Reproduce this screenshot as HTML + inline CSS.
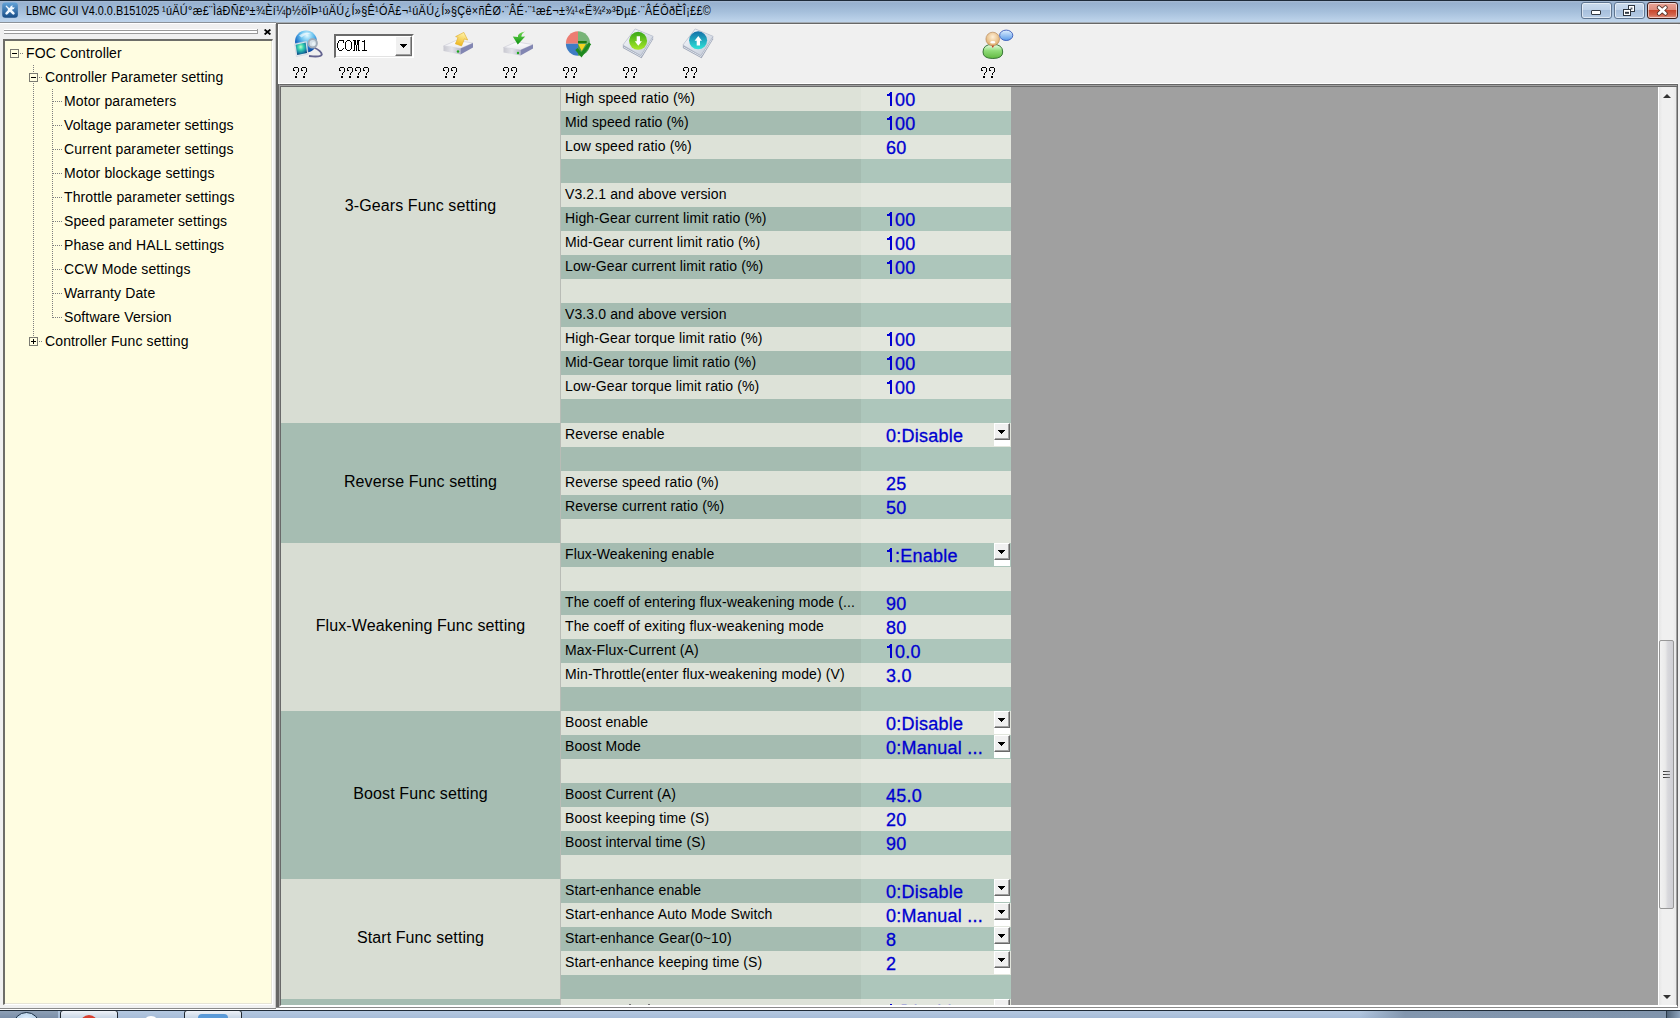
<!DOCTYPE html><html><head><meta charset='utf-8'><style>
*{margin:0;padding:0;box-sizing:border-box}
html,body{width:1680px;height:1018px;overflow:hidden;background:#f0f0f0;font-family:"Liberation Sans",sans-serif}
.a{position:absolute}
.t{position:absolute;white-space:pre;line-height:1}
.tree{font-size:14px;letter-spacing:0.12px;color:#000}
.nm{font-size:14px;letter-spacing:0.12px;color:#000;left:565px}
.val{font-size:18px;letter-spacing:0.25px;color:#0000d0;left:886px;-webkit-text-stroke:0.3px #0000d0}
.grp{font-size:16px;letter-spacing:0.1px;color:#000;text-align:center;width:279px;left:281px}
.q{font-family:"Liberation Mono",monospace;font-size:12.5px;color:#000}
.dd{position:absolute;left:994px;width:16px;height:17px;background:#f0f0f0;border-top:1px solid #fff;border-left:1px solid #fff;border-right:1px solid #696969;border-bottom:1px solid #696969;box-shadow:inset -1px -1px 0 #a0a0a0}

.ddw{position:absolute;left:994px;width:16px;height:6px;background:#fff}
</style></head><body><div class='a' style='left:0;top:0;width:1680px;height:23px;background:linear-gradient(#1e2b3a 0 1px,#a8bcd4 1px,#97b1cf 3px,#a6c0dc 12px,#bdd3ea 21px)'></div><div class='a' style='left:0;top:22px;width:276px;height:1px;background:#8c9298'></div><div class='a' style='left:0;top:23px;width:276px;height:1px;background:#fff'></div><div class='a' style='left:276px;top:22px;width:1404px;height:1px;background:#a4acb4'></div><div class='a' style='left:276px;top:23px;width:1404px;height:1px;background:#686868'></div><svg class='a' style='left:0;top:0' width='22' height='22'><defs><linearGradient id='ai' x1='0' y1='0' x2='0' y2='1'><stop offset='0' stop-color='#62a2d8'/><stop offset='1' stop-color='#174c86'/></linearGradient></defs><rect x='2.2' y='2.6' width='15.7' height='15.1' rx='3' fill='url(#ai)'/><path d='M6.3 6.3 L9 9' stroke='#e8f4ff' stroke-width='1.3' stroke-linecap='round'/><path d='M9 9 L13.4 13.4 M6.6 13.4 L11.6 8.2' stroke='#f0f8ff' stroke-width='2.6' stroke-linecap='round'/><circle cx='12.3' cy='7.5' r='2.1' fill='#f0f8ff'/><circle cx='13.3' cy='6.4' r='1' fill='#4a8ac4'/></svg><div class='t' style='left:26px;top:5px;font-size:12px;color:#000;transform:scaleX(0.905);transform-origin:0 0'>LBMC GUI V4.0.0.B151025</div><div class='t' style='left:162px;top:5px;font-size:12px;letter-spacing:0.35px;color:#000;transform:scaleX(0.905);transform-origin:0 0'>¹úÄÚ°æ£¨ÌáÐÑ£º±¾Èí¼þ½öÏÞ¹úÄÚ¿Í»§Ê¹ÓÃ£¬¹úÄÚ¿Í»§Çë×ñÊØ·¨ÂÉ·¨¹æ£¬±¾¹«Ë¾²»³Ðµ£·¨ÂÉÔðÈÎ¡££©</div><div class='a' style='left:1581px;top:2px;width:31px;height:17px;border:1px solid #5f7590;border-radius:3px;background:linear-gradient(#cbdcee,#bfd2e8 45%,#a7bfdc 50%,#b7cde6);box-shadow:inset 0 0 0 1px rgba(255,255,255,0.55)'></div><div class='a' style='left:1614px;top:2px;width:31px;height:17px;border:1px solid #5f7590;border-radius:3px;background:linear-gradient(#cbdcee,#bfd2e8 45%,#a7bfdc 50%,#b7cde6);box-shadow:inset 0 0 0 1px rgba(255,255,255,0.55)'></div><div class='a' style='left:1647px;top:2px;width:31px;height:17px;border:1px solid #3b1d1a;border-radius:3px;background:linear-gradient(#eaa597,#dd8c7c 45%,#c9472d 50%,#d2664e 80%,#e09484);box-shadow:inset 0 0 0 1px rgba(255,255,255,0.55)'></div><div class='a' style='left:1591px;top:10px;width:10px;height:5px;background:#fff;border:1px solid #333a44;border-radius:1px'></div><svg class='a' style='left:1622px;top:4px' width='14' height='13'><rect x='6.5' y='1.5' width='6' height='6' fill='#fff' stroke='#2e3640'/><rect x='8.5' y='3.5' width='2' height='2' fill='#5a6470'/><rect x='1.5' y='5.5' width='7' height='6' fill='#fff' stroke='#2e3640'/><rect x='3' y='7.8' width='4' height='2' fill='#2e3640'/></svg><svg class='a' style='left:1655px;top:5px' width='14' height='11'><path d='M4 2.5 L10.5 8.5 M10.5 2.5 L4 8.5' stroke='#4a2a20' stroke-width='4.2' stroke-linecap='round'/><path d='M4 2.5 L10.5 8.5 M10.5 2.5 L4 8.5' stroke='#fff' stroke-width='2.6' stroke-linecap='round'/></svg><div class='a' style='left:0;top:24px;width:276px;height:984px;background:#f0f0f0'></div><div class='a' style='left:4px;top:29px;width:254px;height:5px;border-top:1px solid #fff;border-bottom:1px solid #9a9a9a'></div><div class='a' style='left:4px;top:30px;width:254px;height:1px;background:#9a9a9a'></div><div class='a' style='left:4px;top:31px;width:254px;height:2px;background:#fff'></div><svg class='a' style='left:264px;top:29px' width='7' height='6'><path d='M0.6 0.6 L6.4 5.4 M6.4 0.6 L0.6 5.4' stroke='#000' stroke-width='1.9'/></svg><div class='a' style='left:257px;top:29px;width:1px;height:5px;background:#9a9a9a'></div><div class='a' style='left:3px;top:39px;width:270px;height:966px;background:#fffde1;border-top:2px solid #6d6d68;border-left:2px solid #6d6d68;border-right:1px solid #fff;border-bottom:1px solid #fff;box-shadow:inset -1px -1px 0 #e6e4d6'></div><div class='a' style='left:10px;top:49px;width:9px;height:9px;border:1px solid #7a7a72'></div><div class='a' style='left:12px;top:53px;width:5px;height:1px;background:#000'></div><div class='a' style='left:20px;top:53px;width:4px;height:1px;background:repeating-linear-gradient(90deg,#7f7f7f 0 1px,transparent 1px 2px)'></div><div class='t tree' style='left:26px;top:46px'>FOC Controller</div><div class='a' style='left:33px;top:65px;width:1px;height:7px;background:repeating-linear-gradient(#7f7f7f 0 1px,transparent 1px 2px)'></div><div class='a' style='left:33px;top:83px;width:1px;height:259px;background:repeating-linear-gradient(#7f7f7f 0 1px,transparent 1px 2px)'></div><div class='a' style='left:29px;top:73px;width:9px;height:9px;border:1px solid #7a7a72'></div><div class='a' style='left:31px;top:77px;width:5px;height:1px;background:#000'></div><div class='a' style='left:39px;top:77px;width:4px;height:1px;background:repeating-linear-gradient(90deg,#7f7f7f 0 1px,transparent 1px 2px)'></div><div class='t tree' style='left:45px;top:70px'>Controller Parameter setting</div><div class='a' style='left:52px;top:89px;width:1px;height:229px;background:repeating-linear-gradient(#7f7f7f 0 1px,transparent 1px 2px)'></div><div class='a' style='left:53px;top:101px;width:9px;height:1px;background:repeating-linear-gradient(90deg,#7f7f7f 0 1px,transparent 1px 2px)'></div><div class='t tree' style='left:64px;top:94px'>Motor parameters</div><div class='a' style='left:53px;top:125px;width:9px;height:1px;background:repeating-linear-gradient(90deg,#7f7f7f 0 1px,transparent 1px 2px)'></div><div class='t tree' style='left:64px;top:118px'>Voltage parameter settings</div><div class='a' style='left:53px;top:149px;width:9px;height:1px;background:repeating-linear-gradient(90deg,#7f7f7f 0 1px,transparent 1px 2px)'></div><div class='t tree' style='left:64px;top:142px'>Current parameter settings</div><div class='a' style='left:53px;top:173px;width:9px;height:1px;background:repeating-linear-gradient(90deg,#7f7f7f 0 1px,transparent 1px 2px)'></div><div class='t tree' style='left:64px;top:166px'>Motor blockage settings</div><div class='a' style='left:53px;top:197px;width:9px;height:1px;background:repeating-linear-gradient(90deg,#7f7f7f 0 1px,transparent 1px 2px)'></div><div class='t tree' style='left:64px;top:190px'>Throttle parameter settings</div><div class='a' style='left:53px;top:221px;width:9px;height:1px;background:repeating-linear-gradient(90deg,#7f7f7f 0 1px,transparent 1px 2px)'></div><div class='t tree' style='left:64px;top:214px'>Speed parameter settings</div><div class='a' style='left:53px;top:245px;width:9px;height:1px;background:repeating-linear-gradient(90deg,#7f7f7f 0 1px,transparent 1px 2px)'></div><div class='t tree' style='left:64px;top:238px'>Phase and HALL settings</div><div class='a' style='left:53px;top:269px;width:9px;height:1px;background:repeating-linear-gradient(90deg,#7f7f7f 0 1px,transparent 1px 2px)'></div><div class='t tree' style='left:64px;top:262px'>CCW Mode settings</div><div class='a' style='left:53px;top:293px;width:9px;height:1px;background:repeating-linear-gradient(90deg,#7f7f7f 0 1px,transparent 1px 2px)'></div><div class='t tree' style='left:64px;top:286px'>Warranty Date</div><div class='a' style='left:53px;top:317px;width:9px;height:1px;background:repeating-linear-gradient(90deg,#7f7f7f 0 1px,transparent 1px 2px)'></div><div class='t tree' style='left:64px;top:310px'>Software Version</div><div class='a' style='left:29px;top:337px;width:9px;height:9px;border:1px solid #7a7a72'></div><div class='a' style='left:31px;top:341px;width:5px;height:1px;background:#000'></div><div class='a' style='left:33px;top:339px;width:1px;height:5px;background:#000'></div><div class='a' style='left:39px;top:341px;width:4px;height:1px;background:repeating-linear-gradient(90deg,#7f7f7f 0 1px,transparent 1px 2px)'></div><div class='t tree' style='left:45px;top:334px'>Controller Func setting</div><div class='a' style='left:275px;top:24px;width:1px;height:984px;background:#c8c8c8'></div><div class='a' style='left:276px;top:23px;width:2px;height:985px;background:#666'></div><div class='a' style='left:278px;top:84px;width:1px;height:924px;background:#666'></div><div class='a' style='left:278px;top:24px;width:1402px;height:60px;background:#f0f0f0;border-left:1px solid #fff;border-top:1px solid #f8f8f8'></div><div class='a' style='left:279px;top:83px;width:1401px;height:1px;background:#fff'></div><div class='a' style='left:334px;top:34px;width:80px;height:24px;background:#fff;border-top:2px solid #6a6a6a;border-left:2px solid #6a6a6a;border-right:2px solid #fff;border-bottom:1px solid #fff;box-shadow:inset -1px 0 0 #e3e3e3'></div><div class='a' style='left:336px;top:56px;width:76px;height:1px;background:#e3e3e3'></div><div class='a' style='left:395px;top:36px;width:17px;height:20px;background:#f0f0f0;border-top:1px solid #fff;border-left:1px solid #fff;border-right:1px solid #696969;border-bottom:1px solid #696969;box-shadow:inset -1px -1px 0 #a0a0a0'></div><svg class='a' style='left:400px;top:44px' width='7' height='4' shape-rendering='crispEdges'><path d='M0 0h7v1h-1v1h-1v1h-1v1h-1v-1h-1v-1h-1v-1h-1z' fill='#000'/></svg><svg class='a' style='left:0;top:0' width='1100' height='90' shape-rendering='crispEdges'><path fill='#000' d='M339 40h5v1h-5zM347 40h3v1h-3zM353 40h3v1h-3zM357 40h3v1h-3zM364 40h1v1h-1zM338 41h1v1h-1zM343 41h1v1h-1zM346 41h1v1h-1zM350 41h1v1h-1zM354 41h2v1h-2zM357 41h2v1h-2zM362 41h3v1h-3zM338 42h1v1h-1zM343 42h1v1h-1zM345 42h1v1h-1zM351 42h1v1h-1zM354 42h2v1h-2zM357 42h2v1h-2zM364 42h1v1h-1zM337 43h1v1h-1zM345 43h1v1h-1zM351 43h1v1h-1zM354 43h2v1h-2zM357 43h2v1h-2zM364 43h1v1h-1zM337 44h1v1h-1zM345 44h1v1h-1zM351 44h1v1h-1zM354 44h2v1h-2zM357 44h2v1h-2zM364 44h1v1h-1zM337 45h1v1h-1zM345 45h1v1h-1zM351 45h1v1h-1zM354 45h1v1h-1zM356 45h1v1h-1zM358 45h1v1h-1zM364 45h1v1h-1zM337 46h1v1h-1zM345 46h1v1h-1zM351 46h1v1h-1zM354 46h1v1h-1zM356 46h1v1h-1zM358 46h1v1h-1zM364 46h1v1h-1zM337 47h1v1h-1zM345 47h1v1h-1zM351 47h1v1h-1zM354 47h1v1h-1zM356 47h1v1h-1zM358 47h1v1h-1zM364 47h1v1h-1zM338 48h1v1h-1zM343 48h1v1h-1zM345 48h1v1h-1zM351 48h1v1h-1zM354 48h1v1h-1zM356 48h1v1h-1zM358 48h1v1h-1zM364 48h1v1h-1zM338 49h1v1h-1zM342 49h1v1h-1zM346 49h1v1h-1zM350 49h1v1h-1zM354 49h1v1h-1zM356 49h1v1h-1zM358 49h1v1h-1zM364 49h1v1h-1zM339 50h3v1h-3zM347 50h3v1h-3zM353 50h2v1h-2zM356 50h1v1h-1zM358 50h2v1h-2zM362 50h5v1h-5zM294 67h4v1h-4zM302 67h4v1h-4zM340 67h4v1h-4zM348 67h4v1h-4zM356 67h4v1h-4zM364 67h4v1h-4zM444 67h4v1h-4zM452 67h4v1h-4zM504 67h4v1h-4zM512 67h4v1h-4zM564 67h4v1h-4zM572 67h4v1h-4zM624 67h4v1h-4zM632 67h4v1h-4zM684 67h4v1h-4zM692 67h4v1h-4zM982 67h4v1h-4zM990 67h4v1h-4zM293 68h1v1h-1zM298 68h1v1h-1zM301 68h1v1h-1zM306 68h1v1h-1zM339 68h1v1h-1zM344 68h1v1h-1zM347 68h1v1h-1zM352 68h1v1h-1zM355 68h1v1h-1zM360 68h1v1h-1zM363 68h1v1h-1zM368 68h1v1h-1zM443 68h1v1h-1zM448 68h1v1h-1zM451 68h1v1h-1zM456 68h1v1h-1zM503 68h1v1h-1zM508 68h1v1h-1zM511 68h1v1h-1zM516 68h1v1h-1zM563 68h1v1h-1zM568 68h1v1h-1zM571 68h1v1h-1zM576 68h1v1h-1zM623 68h1v1h-1zM628 68h1v1h-1zM631 68h1v1h-1zM636 68h1v1h-1zM683 68h1v1h-1zM688 68h1v1h-1zM691 68h1v1h-1zM696 68h1v1h-1zM981 68h1v1h-1zM986 68h1v1h-1zM989 68h1v1h-1zM994 68h1v1h-1zM293 69h1v1h-1zM298 69h1v1h-1zM301 69h1v1h-1zM306 69h1v1h-1zM339 69h1v1h-1zM344 69h1v1h-1zM347 69h1v1h-1zM352 69h1v1h-1zM355 69h1v1h-1zM360 69h1v1h-1zM363 69h1v1h-1zM368 69h1v1h-1zM443 69h1v1h-1zM448 69h1v1h-1zM451 69h1v1h-1zM456 69h1v1h-1zM503 69h1v1h-1zM508 69h1v1h-1zM511 69h1v1h-1zM516 69h1v1h-1zM563 69h1v1h-1zM568 69h1v1h-1zM571 69h1v1h-1zM576 69h1v1h-1zM623 69h1v1h-1zM628 69h1v1h-1zM631 69h1v1h-1zM636 69h1v1h-1zM683 69h1v1h-1zM688 69h1v1h-1zM691 69h1v1h-1zM696 69h1v1h-1zM981 69h1v1h-1zM986 69h1v1h-1zM989 69h1v1h-1zM994 69h1v1h-1zM293 70h2v1h-2zM298 70h1v1h-1zM301 70h2v1h-2zM306 70h1v1h-1zM339 70h2v1h-2zM344 70h1v1h-1zM347 70h2v1h-2zM352 70h1v1h-1zM355 70h2v1h-2zM360 70h1v1h-1zM363 70h2v1h-2zM368 70h1v1h-1zM443 70h2v1h-2zM448 70h1v1h-1zM451 70h2v1h-2zM456 70h1v1h-1zM503 70h2v1h-2zM508 70h1v1h-1zM511 70h2v1h-2zM516 70h1v1h-1zM563 70h2v1h-2zM568 70h1v1h-1zM571 70h2v1h-2zM576 70h1v1h-1zM623 70h2v1h-2zM628 70h1v1h-1zM631 70h2v1h-2zM636 70h1v1h-1zM683 70h2v1h-2zM688 70h1v1h-1zM691 70h2v1h-2zM696 70h1v1h-1zM981 70h2v1h-2zM986 70h1v1h-1zM989 70h2v1h-2zM994 70h1v1h-1zM298 71h1v1h-1zM306 71h1v1h-1zM344 71h1v1h-1zM352 71h1v1h-1zM360 71h1v1h-1zM368 71h1v1h-1zM448 71h1v1h-1zM456 71h1v1h-1zM508 71h1v1h-1zM516 71h1v1h-1zM568 71h1v1h-1zM576 71h1v1h-1zM628 71h1v1h-1zM636 71h1v1h-1zM688 71h1v1h-1zM696 71h1v1h-1zM986 71h1v1h-1zM994 71h1v1h-1zM297 72h1v1h-1zM305 72h1v1h-1zM343 72h1v1h-1zM351 72h1v1h-1zM359 72h1v1h-1zM367 72h1v1h-1zM447 72h1v1h-1zM455 72h1v1h-1zM507 72h1v1h-1zM515 72h1v1h-1zM567 72h1v1h-1zM575 72h1v1h-1zM627 72h1v1h-1zM635 72h1v1h-1zM687 72h1v1h-1zM695 72h1v1h-1zM985 72h1v1h-1zM993 72h1v1h-1zM296 73h1v1h-1zM304 73h1v1h-1zM342 73h1v1h-1zM350 73h1v1h-1zM358 73h1v1h-1zM366 73h1v1h-1zM446 73h1v1h-1zM454 73h1v1h-1zM506 73h1v1h-1zM514 73h1v1h-1zM566 73h1v1h-1zM574 73h1v1h-1zM626 73h1v1h-1zM634 73h1v1h-1zM686 73h1v1h-1zM694 73h1v1h-1zM984 73h1v1h-1zM992 73h1v1h-1zM296 74h1v1h-1zM304 74h1v1h-1zM342 74h1v1h-1zM350 74h1v1h-1zM358 74h1v1h-1zM366 74h1v1h-1zM446 74h1v1h-1zM454 74h1v1h-1zM506 74h1v1h-1zM514 74h1v1h-1zM566 74h1v1h-1zM574 74h1v1h-1zM626 74h1v1h-1zM634 74h1v1h-1zM686 74h1v1h-1zM694 74h1v1h-1zM984 74h1v1h-1zM992 74h1v1h-1zM295 76h2v1h-2zM303 76h2v1h-2zM341 76h2v1h-2zM349 76h2v1h-2zM357 76h2v1h-2zM365 76h2v1h-2zM445 76h2v1h-2zM453 76h2v1h-2zM505 76h2v1h-2zM513 76h2v1h-2zM565 76h2v1h-2zM573 76h2v1h-2zM625 76h2v1h-2zM633 76h2v1h-2zM685 76h2v1h-2zM693 76h2v1h-2zM983 76h2v1h-2zM991 76h2v1h-2zM295 77h2v1h-2zM303 77h2v1h-2zM341 77h2v1h-2zM349 77h2v1h-2zM357 77h2v1h-2zM365 77h2v1h-2zM445 77h2v1h-2zM453 77h2v1h-2zM505 77h2v1h-2zM513 77h2v1h-2zM565 77h2v1h-2zM573 77h2v1h-2zM625 77h2v1h-2zM633 77h2v1h-2zM685 77h2v1h-2zM693 77h2v1h-2zM983 77h2v1h-2zM991 77h2v1h-2z'/></svg><svg class='a' style='left:290px;top:26px' width='36' height='36' viewBox='0 0 36 36'>
 <defs>
  <radialGradient id='gl' cx='0.55' cy='0.22' r='0.8'><stop offset='0' stop-color='#e4faff'/><stop offset='0.35' stop-color='#6cc4f0'/><stop offset='0.7' stop-color='#1c70c8'/><stop offset='1' stop-color='#083c94'/></radialGradient>
  <radialGradient id='scr' cx='0.45' cy='0.35' r='0.7'><stop offset='0' stop-color='#c0ffc8'/><stop offset='0.35' stop-color='#38d0b0'/><stop offset='0.75' stop-color='#1478a0'/><stop offset='1' stop-color='#0a3470'/></radialGradient>
 </defs>
 <circle cx='16' cy='15.5' r='11' fill='url(#gl)'/>
 <path d='M9 9.5 Q14 5.5 21 7.5 Q15 8 11.5 11.5 Z' fill='#fff' opacity='0.6'/>
 <path d='M24 21.5 Q31.5 25 31.8 28.5 Q31 31.5 19 30' fill='none' stroke='#646490' stroke-width='1.9'/>
 <circle cx='22.7' cy='17.3' r='4.2' fill='#d4e0e8' stroke='#a0acb8' stroke-width='2'/>
 <circle cx='23.6' cy='17.9' r='1.8' fill='#e8f2f6'/>
 <path d='M4.5 17.8 L16.6 15.2 L18.2 28.2 L6.4 30.6 Z' fill='#e4eaf0' stroke='#c4ccd6' stroke-width='0.5'/>
 <path d='M5.6 18.8 L15.7 16.6 L17 26.9 L7.2 29 Z' fill='url(#scr)'/>
</svg>
<svg class='a' style='left:442px;top:28px' width='34' height='30' viewBox='0 0 34 30'>
 <defs><linearGradient id='dtop' x1='0' y1='0' x2='0' y2='1'><stop offset='0' stop-color='#ffffff'/><stop offset='1' stop-color='#e8e8ee'/></linearGradient>
 <linearGradient id='dfr' x1='0' y1='0' x2='1' y2='0'><stop offset='0' stop-color='#c8c8d0'/><stop offset='0.5' stop-color='#e4e4ea'/><stop offset='1' stop-color='#b8b8c8'/></linearGradient>
 <linearGradient id='ya' x1='0' y1='0' x2='0' y2='1'><stop offset='0' stop-color='#fff6b0'/><stop offset='1' stop-color='#f0b820'/></linearGradient></defs>
 <path d='M1.5 18 L14 12.5 L31 15 L18.5 20.5 Z' fill='url(#dtop)' stroke='#c8c8d4' stroke-width='0.6'/>
 <path d='M1.5 18 L18.5 20.5 L18.5 26.5 L1.5 23 Z' fill='url(#dfr)'/>
 <path d='M18.5 20.5 L31 15 L31 19.5 L18.5 26.5 Z' fill='#8286b2'/>
 <circle cx='16' cy='23.5' r='1.2' fill='#1aa81a'/>
 <path d='M11.5 10 L18 3.5 L24 9.5 L20.5 9.5 Q20.5 13 20 17 L13.5 17 Q14 13 14 10 Z' fill='url(#ya)' stroke='#e0b030' stroke-width='0.6' transform='rotate(18 17 16)'/>
</svg>
<svg class='a' style='left:502px;top:28px' width='34' height='30' viewBox='0 0 34 30'>
 <defs><linearGradient id='ga' x1='0' y1='0' x2='0' y2='1'><stop offset='0' stop-color='#70d850'/><stop offset='1' stop-color='#0a9010'/></linearGradient></defs>
 <path d='M1.5 19.5 L14 14 L31 16.5 L18.5 22 Z' fill='url(#dtop)' stroke='#c8c8d4' stroke-width='0.6'/>
 <path d='M1.5 19.5 L18.5 22 L18.5 27.5 L1.5 24.5 Z' fill='url(#dfr)'/>
 <path d='M18.5 22 L31 16.5 L31 20.5 L18.5 27.5 Z' fill='#8286b2'/>
 <circle cx='16' cy='25' r='1.2' fill='#1aa81a'/>
 <path d='M23 3.5 Q15 5 16 9 L10.8 8.6 L15.8 16.6 L23.2 8.6 L19.5 8.8 Q19 6 23 3.5 Z' fill='url(#ga)'/>
</svg>
<svg class='a' style='left:564px;top:30px' width='28' height='28' viewBox='0 0 28 28'>
 <path d='M14 13.7 V1.2 A12.1 12.1 0 0 0 1.9 13.7 Z' fill='#ec7c72'/>
 <path d='M14 13.7 V1.2 A12.1 12.1 0 0 1 26.1 13.7 Z' fill='#78b478'/>
 <path d='M14 13.7 H1.9 A12.1 12.1 0 0 0 14 25.8 Z' fill='#3e7cc4'/>
 <path d='M14 13.7 H26.1 A12.1 12.1 0 0 1 14 25.8 Z' fill='#4c9c4c'/>
 <rect x='14' y='11' width='8.7' height='2.4' fill='#1f7a10'/>
 <path d='M14.2 14 L21.9 14 L17.7 21 Z' fill='#f4d420'/>
 <path d='M12.4 19 L17.4 25 L26 13.4' fill='none' stroke='#1e8a1e' stroke-width='3'/>
</svg>
<svg class='a' style='left:618px;top:24px' width='40' height='38' viewBox='0 0 40 38'>
 <defs><linearGradient id='bk' x1='0' y1='0' x2='1' y2='1'><stop offset='0' stop-color='#fbfcff'/><stop offset='1' stop-color='#c0c8d6'/></linearGradient>
 <linearGradient id='gc' x1='0' y1='0' x2='0' y2='1'><stop offset='0' stop-color='#38a818'/><stop offset='1' stop-color='#a8e828'/></linearGradient>
 <linearGradient id='bc' x1='0' y1='0' x2='0' y2='1'><stop offset='0' stop-color='#1470a8'/><stop offset='1' stop-color='#30e4d8'/></linearGradient></defs>
 <path d='M4.9 23.9 L23.5 34.3 L35.1 15.3 L35.1 12.3 L17.2 4.9 L4.9 21 Z' fill='#9aa2b4'/><path d='M5.5 23 L23 32.6 L34.5 14.3' fill='none' stroke='#eef2f8' stroke-width='0.8'/>
 <path d='M4.9 21 L17.2 4.9 L35.1 12.3 L22.8 31.5 Z' fill='url(#bk)' stroke='#b8c0cc' stroke-width='0.6'/>
 <circle cx='20.1' cy='16.8' r='9' fill='url(#gc)'/>
 <path d='M18.7 12.3 H22 V17.2 H23.9 L20.3 21.8 L16.8 17.2 H18.7 Z' fill='#fff'/>
</svg>
<svg class='a' style='left:678px;top:24px' width='40' height='38' viewBox='0 0 40 38'>
 <path d='M4.9 23.9 L23.5 34.3 L35.1 15.3 L35.1 12.3 L17.2 4.9 L4.9 21 Z' fill='#9aa2b4'/><path d='M5.5 23 L23 32.6 L34.5 14.3' fill='none' stroke='#eef2f8' stroke-width='0.8'/>
 <path d='M4.9 21 L17.2 4.9 L35.1 12.3 L22.8 31.5 Z' fill='url(#bk)' stroke='#b8c0cc' stroke-width='0.6'/>
 <circle cx='20.1' cy='16.3' r='9' fill='url(#bc)'/>
 <path d='M18.7 21.6 H22 V16.8 H23.9 L20.3 11.9 L16.6 16.8 H18.7 Z' fill='#fff'/>
</svg>
<svg class='a' style='left:980px;top:28px' width='36' height='34' viewBox='0 0 36 34'>
 <defs><radialGradient id='hd' cx='0.5' cy='0.35' r='0.6'><stop offset='0' stop-color='#fff0d8'/><stop offset='1' stop-color='#e0b070'/></radialGradient>
 <linearGradient id='bd' x1='0' y1='0' x2='0' y2='1'><stop offset='0' stop-color='#f0fff0'/><stop offset='0.45' stop-color='#90dc78'/><stop offset='1' stop-color='#60b840'/></linearGradient>
 <linearGradient id='bb' x1='0' y1='0' x2='0' y2='1'><stop offset='0' stop-color='#e0f0ff'/><stop offset='1' stop-color='#5a9ae8'/></linearGradient></defs>
 <path d='M3 24 Q3 16.3 12.8 16.3 Q22.7 16.3 22.7 24 Q22.7 30.5 12.8 30.5 Q3 30.5 3 24 Z' fill='url(#bd)' stroke='#2a6a2a' stroke-width='0.9'/>
 <path d='M11.3 17 L14.3 17 L12.8 20 Z' fill='#c82010'/>
 <circle cx='12.7' cy='11' r='6.8' fill='url(#hd)' stroke='#b08050' stroke-width='0.6'/>
 <ellipse cx='12.8' cy='14.2' rx='2.6' ry='1.3' fill='#fff'/>
 <ellipse cx='26.2' cy='7.3' rx='6.6' ry='5.2' fill='url(#bb)' stroke='#3a5ab8' stroke-width='0.9'/>
</svg>
<div class='a' style='left:279px;top:84px;width:1399px;height:923px;background:#a0a0a0;border-top:1px solid #666;border-left:1px solid #a0a0a0;border-right:1px solid #666;border-bottom:1px solid #fff'></div><div class='a' style='left:279px;top:85px;width:1398px;height:1px;background:#a0a0a0'></div><div class='a' style='left:280px;top:86px;width:1397px;height:920px;border-top:1px solid #696969;border-left:1px solid #696969;border-bottom:1px solid #fff'></div><div class='a' style='left:281px;top:87px;width:1377px;height:918px;overflow:hidden'><div class='a' style='left:-281px;top:-87px;width:1680px;height:1100px'><div class='a' style='left:281px;top:87px;width:279px;height:336px;background:#d8ddd3'></div><div class='t grp' style='top:198px'>3-Gears Func setting</div><div class='a' style='left:561px;top:87px;width:300px;height:24px;background:#dde2d8'></div><div class='a' style='left:861px;top:87px;width:150px;height:24px;background:#e2e6dd'></div><div class='t nm' style='top:91px'>High speed ratio (%)</div><svg class='a' style='left:886px;top:92px' width='8' height='14' shape-rendering='crispEdges'><path d='M4 0h2v14h-2z M3 1h1v3h-1z M1 2h2v2h-2z' fill='#0000d0'/></svg><div class='t val' style='top:91px;left:895px'>00</div><div class='a' style='left:561px;top:111px;width:300px;height:24px;background:#a5bcb1'></div><div class='a' style='left:861px;top:111px;width:150px;height:24px;background:#adc6bb'></div><div class='t nm' style='top:115px'>Mid speed ratio (%)</div><svg class='a' style='left:886px;top:116px' width='8' height='14' shape-rendering='crispEdges'><path d='M4 0h2v14h-2z M3 1h1v3h-1z M1 2h2v2h-2z' fill='#0000d0'/></svg><div class='t val' style='top:115px;left:895px'>00</div><div class='a' style='left:561px;top:135px;width:300px;height:24px;background:#dde2d8'></div><div class='a' style='left:861px;top:135px;width:150px;height:24px;background:#e2e6dd'></div><div class='t nm' style='top:139px'>Low speed ratio (%)</div><div class='t val' style='top:139px'>60</div><div class='a' style='left:561px;top:159px;width:300px;height:24px;background:#a5bcb1'></div><div class='a' style='left:861px;top:159px;width:150px;height:24px;background:#adc6bb'></div><div class='a' style='left:561px;top:183px;width:300px;height:24px;background:#dde2d8'></div><div class='a' style='left:861px;top:183px;width:150px;height:24px;background:#e2e6dd'></div><div class='t nm' style='top:187px'>V3.2.1 and above version</div><div class='a' style='left:561px;top:207px;width:300px;height:24px;background:#a5bcb1'></div><div class='a' style='left:861px;top:207px;width:150px;height:24px;background:#adc6bb'></div><div class='t nm' style='top:211px'>High-Gear current limit ratio (%)</div><svg class='a' style='left:886px;top:212px' width='8' height='14' shape-rendering='crispEdges'><path d='M4 0h2v14h-2z M3 1h1v3h-1z M1 2h2v2h-2z' fill='#0000d0'/></svg><div class='t val' style='top:211px;left:895px'>00</div><div class='a' style='left:561px;top:231px;width:300px;height:24px;background:#dde2d8'></div><div class='a' style='left:861px;top:231px;width:150px;height:24px;background:#e2e6dd'></div><div class='t nm' style='top:235px'>Mid-Gear current limit ratio (%)</div><svg class='a' style='left:886px;top:236px' width='8' height='14' shape-rendering='crispEdges'><path d='M4 0h2v14h-2z M3 1h1v3h-1z M1 2h2v2h-2z' fill='#0000d0'/></svg><div class='t val' style='top:235px;left:895px'>00</div><div class='a' style='left:561px;top:255px;width:300px;height:24px;background:#a5bcb1'></div><div class='a' style='left:861px;top:255px;width:150px;height:24px;background:#adc6bb'></div><div class='t nm' style='top:259px'>Low-Gear current limit ratio (%)</div><svg class='a' style='left:886px;top:260px' width='8' height='14' shape-rendering='crispEdges'><path d='M4 0h2v14h-2z M3 1h1v3h-1z M1 2h2v2h-2z' fill='#0000d0'/></svg><div class='t val' style='top:259px;left:895px'>00</div><div class='a' style='left:561px;top:279px;width:300px;height:24px;background:#dde2d8'></div><div class='a' style='left:861px;top:279px;width:150px;height:24px;background:#e2e6dd'></div><div class='a' style='left:561px;top:303px;width:300px;height:24px;background:#a5bcb1'></div><div class='a' style='left:861px;top:303px;width:150px;height:24px;background:#adc6bb'></div><div class='t nm' style='top:307px'>V3.3.0 and above version</div><div class='a' style='left:561px;top:327px;width:300px;height:24px;background:#dde2d8'></div><div class='a' style='left:861px;top:327px;width:150px;height:24px;background:#e2e6dd'></div><div class='t nm' style='top:331px'>High-Gear torque limit ratio (%)</div><svg class='a' style='left:886px;top:332px' width='8' height='14' shape-rendering='crispEdges'><path d='M4 0h2v14h-2z M3 1h1v3h-1z M1 2h2v2h-2z' fill='#0000d0'/></svg><div class='t val' style='top:331px;left:895px'>00</div><div class='a' style='left:561px;top:351px;width:300px;height:24px;background:#a5bcb1'></div><div class='a' style='left:861px;top:351px;width:150px;height:24px;background:#adc6bb'></div><div class='t nm' style='top:355px'>Mid-Gear torque limit ratio (%)</div><svg class='a' style='left:886px;top:356px' width='8' height='14' shape-rendering='crispEdges'><path d='M4 0h2v14h-2z M3 1h1v3h-1z M1 2h2v2h-2z' fill='#0000d0'/></svg><div class='t val' style='top:355px;left:895px'>00</div><div class='a' style='left:561px;top:375px;width:300px;height:24px;background:#dde2d8'></div><div class='a' style='left:861px;top:375px;width:150px;height:24px;background:#e2e6dd'></div><div class='t nm' style='top:379px'>Low-Gear torque limit ratio (%)</div><svg class='a' style='left:886px;top:380px' width='8' height='14' shape-rendering='crispEdges'><path d='M4 0h2v14h-2z M3 1h1v3h-1z M1 2h2v2h-2z' fill='#0000d0'/></svg><div class='t val' style='top:379px;left:895px'>00</div><div class='a' style='left:561px;top:399px;width:300px;height:24px;background:#a5bcb1'></div><div class='a' style='left:861px;top:399px;width:150px;height:24px;background:#adc6bb'></div><div class='a' style='left:281px;top:423px;width:279px;height:120px;background:#a6bdb2'></div><div class='t grp' style='top:474px'>Reverse Func setting</div><div class='a' style='left:561px;top:423px;width:300px;height:24px;background:#dde2d8'></div><div class='a' style='left:861px;top:423px;width:150px;height:24px;background:#e2e6dd'></div><div class='t nm' style='top:427px'>Reverse enable</div><div class='t val' style='top:427px'>0:Disable</div><div class='dd' style='top:423px'></div><svg class='a' style='left:998px;top:430px' width='7' height='4' shape-rendering='crispEdges'><path d='M0 0h7v1h-1v1h-1v1h-1v1h-1v-1h-1v-1h-1v-1h-1z' fill='#000'/></svg><div class='ddw' style='top:440px'></div><div class='a' style='left:561px;top:447px;width:300px;height:24px;background:#a5bcb1'></div><div class='a' style='left:861px;top:447px;width:150px;height:24px;background:#adc6bb'></div><div class='a' style='left:561px;top:471px;width:300px;height:24px;background:#dde2d8'></div><div class='a' style='left:861px;top:471px;width:150px;height:24px;background:#e2e6dd'></div><div class='t nm' style='top:475px'>Reverse speed ratio (%)</div><div class='t val' style='top:475px'>25</div><div class='a' style='left:561px;top:495px;width:300px;height:24px;background:#a5bcb1'></div><div class='a' style='left:861px;top:495px;width:150px;height:24px;background:#adc6bb'></div><div class='t nm' style='top:499px'>Reverse current ratio (%)</div><div class='t val' style='top:499px'>50</div><div class='a' style='left:561px;top:519px;width:300px;height:24px;background:#dde2d8'></div><div class='a' style='left:861px;top:519px;width:150px;height:24px;background:#e2e6dd'></div><div class='a' style='left:281px;top:543px;width:279px;height:168px;background:#d8ddd3'></div><div class='t grp' style='top:618px'>Flux-Weakening Func setting</div><div class='a' style='left:561px;top:543px;width:300px;height:24px;background:#a5bcb1'></div><div class='a' style='left:861px;top:543px;width:150px;height:24px;background:#adc6bb'></div><div class='t nm' style='top:547px'>Flux-Weakening enable</div><svg class='a' style='left:886px;top:548px' width='8' height='14' shape-rendering='crispEdges'><path d='M4 0h2v14h-2z M3 1h1v3h-1z M1 2h2v2h-2z' fill='#0000d0'/></svg><div class='t val' style='top:547px;left:895px'>:Enable</div><div class='dd' style='top:543px'></div><svg class='a' style='left:998px;top:550px' width='7' height='4' shape-rendering='crispEdges'><path d='M0 0h7v1h-1v1h-1v1h-1v1h-1v-1h-1v-1h-1v-1h-1z' fill='#000'/></svg><div class='ddw' style='top:560px'></div><div class='a' style='left:561px;top:567px;width:300px;height:24px;background:#dde2d8'></div><div class='a' style='left:861px;top:567px;width:150px;height:24px;background:#e2e6dd'></div><div class='a' style='left:561px;top:591px;width:300px;height:24px;background:#a5bcb1'></div><div class='a' style='left:861px;top:591px;width:150px;height:24px;background:#adc6bb'></div><div class='t nm' style='top:595px'>The coeff of entering flux-weakening mode (...</div><div class='t val' style='top:595px'>90</div><div class='a' style='left:561px;top:615px;width:300px;height:24px;background:#dde2d8'></div><div class='a' style='left:861px;top:615px;width:150px;height:24px;background:#e2e6dd'></div><div class='t nm' style='top:619px'>The coeff of exiting flux-weakening mode</div><div class='t val' style='top:619px'>80</div><div class='a' style='left:561px;top:639px;width:300px;height:24px;background:#a5bcb1'></div><div class='a' style='left:861px;top:639px;width:150px;height:24px;background:#adc6bb'></div><div class='t nm' style='top:643px'>Max-Flux-Current (A)</div><svg class='a' style='left:886px;top:644px' width='8' height='14' shape-rendering='crispEdges'><path d='M4 0h2v14h-2z M3 1h1v3h-1z M1 2h2v2h-2z' fill='#0000d0'/></svg><div class='t val' style='top:643px;left:895px'>0.0</div><div class='a' style='left:561px;top:663px;width:300px;height:24px;background:#dde2d8'></div><div class='a' style='left:861px;top:663px;width:150px;height:24px;background:#e2e6dd'></div><div class='t nm' style='top:667px'>Min-Throttle(enter flux-weakening mode) (V)</div><div class='t val' style='top:667px'>3.0</div><div class='a' style='left:561px;top:687px;width:300px;height:24px;background:#a5bcb1'></div><div class='a' style='left:861px;top:687px;width:150px;height:24px;background:#adc6bb'></div><div class='a' style='left:281px;top:711px;width:279px;height:168px;background:#a6bdb2'></div><div class='t grp' style='top:786px'>Boost Func setting</div><div class='a' style='left:561px;top:711px;width:300px;height:24px;background:#dde2d8'></div><div class='a' style='left:861px;top:711px;width:150px;height:24px;background:#e2e6dd'></div><div class='t nm' style='top:715px'>Boost enable</div><div class='t val' style='top:715px'>0:Disable</div><div class='dd' style='top:711px'></div><svg class='a' style='left:998px;top:718px' width='7' height='4' shape-rendering='crispEdges'><path d='M0 0h7v1h-1v1h-1v1h-1v1h-1v-1h-1v-1h-1v-1h-1z' fill='#000'/></svg><div class='ddw' style='top:728px'></div><div class='a' style='left:561px;top:735px;width:300px;height:24px;background:#a5bcb1'></div><div class='a' style='left:861px;top:735px;width:150px;height:24px;background:#adc6bb'></div><div class='t nm' style='top:739px'>Boost Mode</div><div class='t val' style='top:739px'>0:Manual ...</div><div class='dd' style='top:735px'></div><svg class='a' style='left:998px;top:742px' width='7' height='4' shape-rendering='crispEdges'><path d='M0 0h7v1h-1v1h-1v1h-1v1h-1v-1h-1v-1h-1v-1h-1z' fill='#000'/></svg><div class='ddw' style='top:752px'></div><div class='a' style='left:561px;top:759px;width:300px;height:24px;background:#dde2d8'></div><div class='a' style='left:861px;top:759px;width:150px;height:24px;background:#e2e6dd'></div><div class='a' style='left:561px;top:783px;width:300px;height:24px;background:#a5bcb1'></div><div class='a' style='left:861px;top:783px;width:150px;height:24px;background:#adc6bb'></div><div class='t nm' style='top:787px'>Boost Current (A)</div><div class='t val' style='top:787px'>45.0</div><div class='a' style='left:561px;top:807px;width:300px;height:24px;background:#dde2d8'></div><div class='a' style='left:861px;top:807px;width:150px;height:24px;background:#e2e6dd'></div><div class='t nm' style='top:811px'>Boost keeping time (S)</div><div class='t val' style='top:811px'>20</div><div class='a' style='left:561px;top:831px;width:300px;height:24px;background:#a5bcb1'></div><div class='a' style='left:861px;top:831px;width:150px;height:24px;background:#adc6bb'></div><div class='t nm' style='top:835px'>Boost interval time (S)</div><div class='t val' style='top:835px'>90</div><div class='a' style='left:561px;top:855px;width:300px;height:24px;background:#dde2d8'></div><div class='a' style='left:861px;top:855px;width:150px;height:24px;background:#e2e6dd'></div><div class='a' style='left:281px;top:879px;width:279px;height:120px;background:#d8ddd3'></div><div class='t grp' style='top:930px'>Start Func setting</div><div class='a' style='left:561px;top:879px;width:300px;height:24px;background:#a5bcb1'></div><div class='a' style='left:861px;top:879px;width:150px;height:24px;background:#adc6bb'></div><div class='t nm' style='top:883px'>Start-enhance enable</div><div class='t val' style='top:883px'>0:Disable</div><div class='dd' style='top:879px'></div><svg class='a' style='left:998px;top:886px' width='7' height='4' shape-rendering='crispEdges'><path d='M0 0h7v1h-1v1h-1v1h-1v1h-1v-1h-1v-1h-1v-1h-1z' fill='#000'/></svg><div class='ddw' style='top:896px'></div><div class='a' style='left:561px;top:903px;width:300px;height:24px;background:#dde2d8'></div><div class='a' style='left:861px;top:903px;width:150px;height:24px;background:#e2e6dd'></div><div class='t nm' style='top:907px'>Start-enhance Auto Mode Switch</div><div class='t val' style='top:907px'>0:Manual ...</div><div class='dd' style='top:903px'></div><svg class='a' style='left:998px;top:910px' width='7' height='4' shape-rendering='crispEdges'><path d='M0 0h7v1h-1v1h-1v1h-1v1h-1v-1h-1v-1h-1v-1h-1z' fill='#000'/></svg><div class='ddw' style='top:920px'></div><div class='a' style='left:561px;top:927px;width:300px;height:24px;background:#a5bcb1'></div><div class='a' style='left:861px;top:927px;width:150px;height:24px;background:#adc6bb'></div><div class='t nm' style='top:931px'>Start-enhance Gear(0~10)</div><div class='t val' style='top:931px'>8</div><div class='dd' style='top:927px'></div><svg class='a' style='left:998px;top:934px' width='7' height='4' shape-rendering='crispEdges'><path d='M0 0h7v1h-1v1h-1v1h-1v1h-1v-1h-1v-1h-1v-1h-1z' fill='#000'/></svg><div class='ddw' style='top:944px'></div><div class='a' style='left:561px;top:951px;width:300px;height:24px;background:#dde2d8'></div><div class='a' style='left:861px;top:951px;width:150px;height:24px;background:#e2e6dd'></div><div class='t nm' style='top:955px'>Start-enhance keeping time (S)</div><div class='t val' style='top:955px'>2</div><div class='dd' style='top:951px'></div><svg class='a' style='left:998px;top:958px' width='7' height='4' shape-rendering='crispEdges'><path d='M0 0h7v1h-1v1h-1v1h-1v1h-1v-1h-1v-1h-1v-1h-1z' fill='#000'/></svg><div class='ddw' style='top:968px'></div><div class='a' style='left:561px;top:975px;width:300px;height:24px;background:#a5bcb1'></div><div class='a' style='left:861px;top:975px;width:150px;height:24px;background:#adc6bb'></div><div class='a' style='left:281px;top:999px;width:279px;height:101px;background:#a6bdb2'></div><div class='a' style='left:561px;top:999px;width:300px;height:24px;background:#dde2d8'></div><div class='a' style='left:861px;top:999px;width:150px;height:24px;background:#e2e6dd'></div><svg class='a' style='left:886px;top:1004px' width='8' height='14' shape-rendering='crispEdges'><path d='M4 0h2v14h-2z M3 1h1v3h-1z M1 2h2v2h-2z' fill='#0000d0'/></svg><div class='t val' style='top:1003px;left:895px'>:Disable</div><div class='dd' style='top:999px'></div><svg class='a' style='left:998px;top:1006px' width='7' height='4' shape-rendering='crispEdges'><path d='M0 0h7v1h-1v1h-1v1h-1v1h-1v-1h-1v-1h-1v-1h-1z' fill='#000'/></svg><div class='ddw' style='top:1016px'></div></div></div><div class='a' style='left:629px;top:1004px;width:2px;height:1px;background:#777'></div><div class='a' style='left:648px;top:1004px;width:2px;height:1px;background:#777'></div><div class='a' style='left:560px;top:87px;width:1px;height:918px;background:#c9cec4;opacity:0.6'></div><div class='a' style='left:1658px;top:87px;width:18px;height:918px;background:linear-gradient(90deg,#e6e6e6,#f0f0f0 20%,#f0f0f0 80%,#e9e9e9);border-left:1px solid #fff'></div><div class='a' style='left:1663px;top:94px;border-left:4px solid transparent;border-right:4px solid transparent;border-bottom:4px solid #333'></div><div class='a' style='left:1663px;top:995px;border-left:4px solid transparent;border-right:4px solid transparent;border-top:4px solid #333'></div><div class='a' style='left:1659px;top:640px;width:15px;height:269px;border:1px solid #979797;border-radius:2px;background:linear-gradient(90deg,#f2f2f2,#eaeaea 40%,#d8d8dc 60%,#cfcfd4)'></div><div class='a' style='left:1663px;top:771px;width:7px;height:1px;background:linear-gradient(90deg,#333,#777)'></div><div class='a' style='left:1663px;top:774px;width:7px;height:1px;background:linear-gradient(90deg,#333,#777)'></div><div class='a' style='left:1663px;top:777px;width:7px;height:1px;background:linear-gradient(90deg,#333,#777)'></div><div class='a' style='left:0;top:1008px;width:276px;height:1px;background:#8a8a8a'></div><div class='a' style='left:0;top:1009px;width:276px;height:1px;background:#fff'></div><div class='a' style='left:276px;top:1007px;width:1404px;height:1px;background:#8a8a8a'></div><div class='a' style='left:276px;top:1008px;width:1404px;height:2px;background:#fff'></div><div class='a' style='left:1678px;top:24px;width:2px;height:984px;background:#f0f0f0'></div><div class='a' style='left:0;top:1010px;width:1680px;height:8px;background:linear-gradient(#1e2a36 0 1px,#b4c8e0 1px,#a6bcd8)'></div><div class='a' style='left:0;top:1011px;width:58px;height:7px;background:linear-gradient(#8ea0b6,#7a8ea8)'></div><div class='a' style='left:13px;top:1012px;width:27px;height:27px;border-radius:50%;border:1px solid #1b3046;background:radial-gradient(circle at 50% 30%,#e0f0ff,#8aaed0)'></div><div class='a' style='left:60px;top:1010px;width:58px;height:9px;border:1px solid #202830;border-radius:3px 3px 0 0;background:linear-gradient(#eef2f8,#c8d6e6)'></div><div class='a' style='left:80px;top:1015px;width:18px;height:18px;border-radius:50%;background:#d94030'></div><div class='a' style='left:142px;top:1016px;width:18px;height:18px;border-radius:50%;background:#fff'></div><div class='a' style='left:184px;top:1010px;width:58px;height:9px;border:1px solid #202830;border-radius:3px 3px 0 0;background:linear-gradient(#eef2f8,#c8d6e6)'></div><div class='a' style='left:198px;top:1014px;width:30px;height:10px;border-radius:4px;background:#5a9ad8'></div><div class='a' style='left:1360px;top:1011px;width:306px;height:7px;background:linear-gradient(90deg,rgba(128,148,172,0),#8296ae 45px,#8094ac)'></div><div class='a' style='left:1666px;top:1011px;width:14px;height:7px;background:linear-gradient(90deg,#50647a,#8ea4bc);border-left:1px solid #2a3a4a'></div></body></html>
